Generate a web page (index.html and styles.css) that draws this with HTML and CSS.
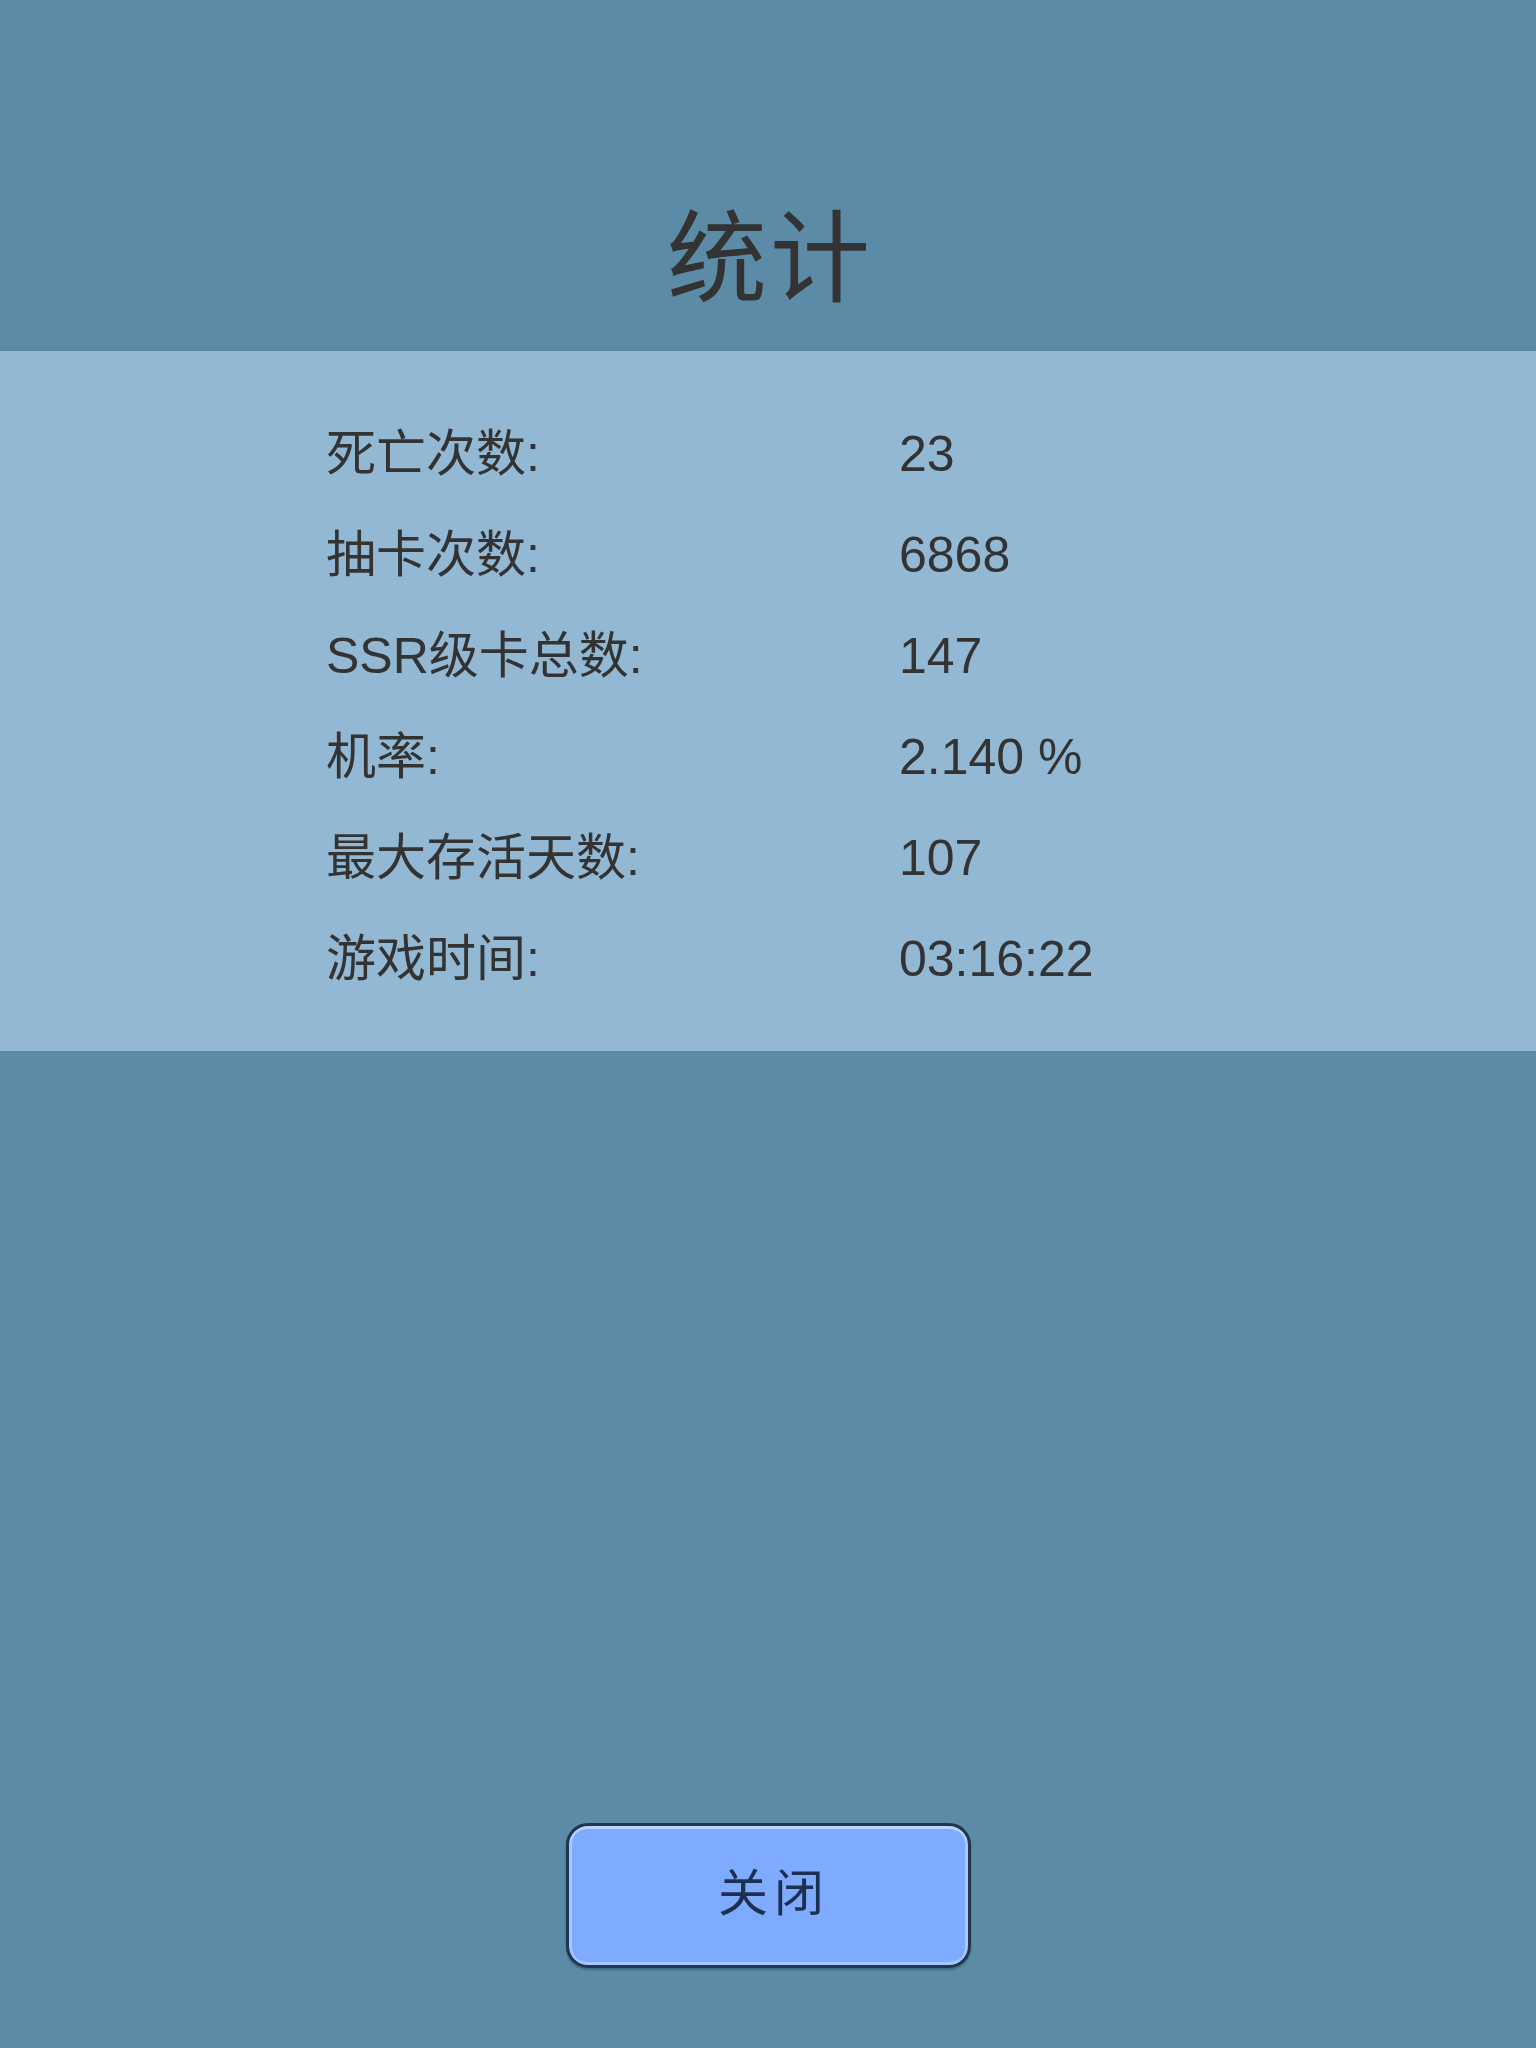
FILE: index.html
```html
<!DOCTYPE html>
<html lang="zh-CN">
<head>
    <meta charset="utf-8">
    <title>统计</title>
    <link rel="stylesheet" href="styles.css">
</head>
<body>
    <div class="screen">
        <h1 class="title">统计</h1>
        <div class="stats">
            <div class="row"><span class="label">死亡次数:</span><span class="value">23</span></div>
            <div class="row"><span class="label">抽卡次数:</span><span class="value">6868</span></div>
            <div class="row"><span class="label">SSR级卡总数:</span><span class="value">147</span></div>
            <div class="row"><span class="label">机率:</span><span class="value">2.140 %</span></div>
            <div class="row"><span class="label">最大存活天数:</span><span class="value">107</span></div>
            <div class="row"><span class="label">游戏时间:</span><span class="value">03:16:22</span></div>
        </div>
        <div class="footer">
            <button class="close-button">关闭</button>
        </div>
    </div>
</body>
</html>
```
FILE: styles.css
```css
body{
    margin: 0;
    background-color: #5b8ba6;
    font-family: "Liberation Sans", "Noto Sans CJK SC", sans-serif;
    color: #333333;
}
.screen{
    height: 2048px;
    display: flex;
    flex-direction: column;
}
.title{
    margin: 0;
    height: 351px;
    box-sizing: border-box;
    padding: 209px 0 0 4px;
    font-size: 100px;
    line-height: 100px;
    font-weight: normal;
    text-align: center;
    letter-spacing: 3px;
}
.stats{
    background-color: #93b8d4;
    height: 700px;
    box-sizing: border-box;
    padding: 53px 0 0 326px;
    box-shadow: 0 -5px 0 #5888a2, 0 2px 0 #5a88a2;
}
.row{
    display: grid;
    grid-template-columns: 573px auto;
    height: 101px;
    line-height: 101px;
    font-size: 50px;
}
.footer{
    flex: 1;
    display: flex;
    justify-content: center;
    align-items: flex-end;
    padding-bottom: 80px;
}
.close-button{
    width: 405px;
    height: 145px;
    box-sizing: border-box;
    border: 3px solid #22354f;
    border-radius: 22px;
    background-color: #7eaaff;
    box-shadow: inset 0 3px 0 #b9d3ff, inset 3px 0 0 #a6c6ff, inset -3px 0 0 #a6c6ff, inset 0 -3px 0 #a6c6ff, 0 2px 2px rgba(20, 40, 60, 0.35);
    font-family: "Liberation Sans", "Noto Sans CJK SC", sans-serif;
    font-size: 50px;
    color: #1c3050;
    padding: 0 0 14px 12px;
    letter-spacing: 6px;
    cursor: pointer;
}
```
